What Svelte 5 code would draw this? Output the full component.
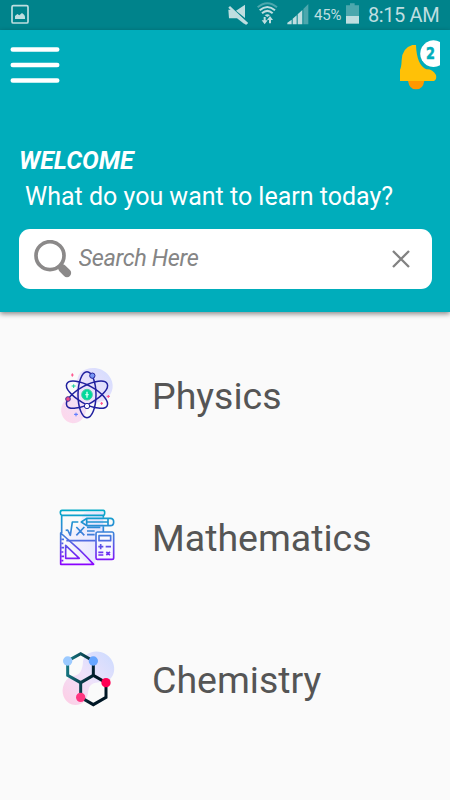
<script>
  let query = '';

  const subjects = ['Physics', 'Mathematics', 'Chemistry'];
</script>

<svelte:head>
  <title>Learn</title>
</svelte:head>

<div class="screen">
  <div class="status">
    <svg class="picture" width="18" height="20" viewBox="0 0 54 60">
      <rect x="3" y="5" width="48" height="52" rx="4" fill="none" stroke="currentColor" stroke-width="5" />
      <path d="M12 45V36L19 30L25 34L33 27L40 33L42 38V45z" fill="currentColor" />
    </svg>
    <div class="signals">
      <svg width="85" height="30" viewBox="20 0 255 90">
        <path d="M47 32L74 14V54zM24 29H38L83 69L77 74L73 70V73L50 55H26z" fill="currentColor" />
        <path d="M24 23L29 18L83 69L77 74z" fill="currentColor" />
        <g fill="none" stroke="currentColor" stroke-width="6">
          <path d="M112 22Q141 -3 170 22" opacity="0.4" />
          <path d="M118 31Q141 11 164 31M125 40Q141 25 157 40" />
          <path d="M133 66V51M149 53V70" />
        </g>
        <path d="M124 61H142L133 73zM140 60H158L149 48zM133 46Q141 39 149 46L141 51z" fill="currentColor" />
        <path d="M201 73V68L214 59V73zM217 73V56L229 46V73zM232 73V43L246 30V73z" fill="currentColor" />
        <path d="M249 73V27L264 12V73z" fill="currentColor" opacity="0.4" />
      </svg>
      <span class="percent">45%</span>
      <svg class="battery" width="13" height="30" viewBox="0 0 39 90">
        <path d="M0 16H12V10H26V16H39V48H0z" fill="currentColor" opacity="0.4" />
        <path d="M0 48H39V71H0z" fill="currentColor" />
      </svg>
      <span class="clock">8:15 AM</span>
    </div>
  </div>

  <header>
    <div class="toolbar">
      <button aria-label="Menu">
        <svg width="50" height="40" viewBox="0 0 50 40">
          <path d="M2.8 4.5H47.2M2.8 20H47.2M2.8 35.5H47.2" stroke="#fff" stroke-width="4.6" stroke-linecap="round" />
        </svg>
      </button>
      <button class="bell" aria-label="Notifications">
        <svg width="50" height="60" viewBox="0 0 150 180">
          <path d="M54 137H103Q99 163 78 163Q58 163 54 137z" fill="#ff9800" />
          <path d="M30 138V104Q34 98 35 76Q36 39 67 30H78Q80 90 109 103Q128 102 138 120Q141 133 132 138z" fill="#ffc107" />
          <path d="M150 11A47 47 0 1 0 150 102z" fill="#00adbb" />
          <path d="M150 21A40 40 0 1 0 150 91z" fill="#fff" />
        </svg>
        <span class="badge">2</span>
      </button>
    </div>
    <h1>WELCOME</h1>
    <p>What do you want to learn today?</p>
    <div class="search">
      <svg width="38" height="38" viewBox="0 0 114 114">
        <circle cx="48" cy="47" r="42" fill="none" stroke="#8b8989" stroke-width="11" />
        <path d="M78 78L82 82" stroke="#8b8989" stroke-width="14" />
        <path d="M85 85L99 99" stroke="#8b8989" stroke-width="25" stroke-linecap="round" />
      </svg>
      <input type="text" placeholder="Search Here" bind:value={query} />
      <button aria-label="Clear" on:click={() => (query = '')}>
        <svg width="18" height="18" viewBox="0 0 18 18">
          <path d="M1 1L17 17M17 1L1 17" stroke="#828282" stroke-width="2.3" />
        </svg>
      </button>
    </div>
  </header>

  <main>
    {#each subjects as subject}
      <div class="subject">
        {#if subject === 'Physics'}
          <svg width="70" height="70" viewBox="0 3 210 210">
            <defs>
              <linearGradient id="atom" x1="0" y1="1" x2="1" y2="0">
                <stop offset="0" stop-color="#ffd6e9" />
                <stop offset="0.5" stop-color="#eee2fa" />
                <stop offset="1" stop-color="#d2dcff" />
              </linearGradient>
            </defs>
            <path d="M76 111C82 80 76 56 91 38C114 18 155 19 177 47C195 70 190 99 170 116C150 132 119 123 110 145C106 173 91 190 68 190C42 187 27 161 36 136C43 119 57 111 76 111z" fill="url(#atom)" />
            <g fill="none" stroke="#20209f" stroke-width="4.5">
              <ellipse cx="111" cy="104" rx="27" ry="69" />
              <ellipse cx="111" cy="104" rx="27" ry="69" transform="rotate(61 111 104)" />
              <ellipse cx="111" cy="104" rx="27" ry="69" transform="rotate(-61 111 104)" />
            </g>
            <circle cx="111" cy="104" r="16" fill="#00d99b" stroke="#45cda3" stroke-width="3" />
            <path d="M111 95V113M106 104H116" stroke="#d5fff2" stroke-width="4" />
            <circle cx="127" cy="47" r="8" fill="#7796f5" stroke="#24249b" stroke-width="3" />
            <circle cx="54" cy="117" r="7" fill="#f04c88" stroke="#473098" stroke-width="3" />
            <circle cx="111" cy="138" r="8" fill="#f7f5ff" stroke="#24249b" stroke-width="3" />
            <path d="M67 40V50M63 45H71M175 105V114M170 109H180M155 126V135M151 130H159" stroke="#ff4d88" stroke-width="3" />
            <path d="M71 73V84M65 78H77" stroke="#16ce9c" stroke-width="3" />
            <path d="M78 158V169M72 163H84" stroke="#5576ff" stroke-width="3" />
          </svg>
        {:else if subject === 'Mathematics'}
          <svg width="70" height="70" viewBox="0 9 210 210">
            <defs>
              <linearGradient id="board" gradientUnits="userSpaceOnUse" x1="80" y1="30" x2="80" y2="195">
                <stop offset="0" stop-color="#00abc7" />
                <stop offset="0.5" stop-color="#4778dd" />
                <stop offset="1" stop-color="#8c00ff" />
              </linearGradient>
              <linearGradient id="shade" x1="0" x2="1">
                <stop offset="0" stop-color="#f8f4fc" />
                <stop offset="1" stop-color="#e3e4ff" />
              </linearGradient>
            </defs>
            <path d="M48 105C70 95 88 86 97 48Q99 36 115 36H160V100H136V190H121C90 183 73 145 48 127z" fill="url(#shade)" />
            <path d="M138 97H191V178H138z" fill="#f8f8ff" />
            <g fill="none" stroke="url(#board)" stroke-width="5" stroke-linejoin="round">
              <path d="M36 31H160Q164 31 164 38Q164 46 159 46H36Q31 45 31 38Q31 31 36 31zM35 46V99M160 46V53M160 79V96M49 122H137" />
              <path d="M47 91L53 90L61 106L67 66H85M79 81L103 106M103 81L79 106M111 82H151M111 93H134M111 104H134" />
              <path d="M94 66L110 55H181Q191 55 191 66Q191 77 181 77H110zM110 55V77M174 55V77M110 66H174" />
              <path d="M32 99V193H131L110 171L88 149L32 99zM47 136V175H88zM35 118H42M35 130H40M35 143H42M35 156H40M35 169H42M35 182H40" />
              <path d="M142 96H187Q191 96 191 101V173Q191 178 186 178H142Q138 178 138 173V101Q138 96 142 96zM147 107H182V122H147zM152 132V148M145 140H160M167 140H183M145 157H160M145 165H160M169 156L180 165M180 156L169 165" />
            </g>
          </svg>
        {:else}
          <svg width="70" height="70" viewBox="0 15 210 210">
            <defs>
              <linearGradient id="blob" x1="0" y1="1" x2="1" y2="0">
                <stop offset="0" stop-color="#ffcce3" />
                <stop offset="0.5" stop-color="#eee2fa" />
                <stop offset="1" stop-color="#cbdbff" />
              </linearGradient>
              <linearGradient id="bond" gradientUnits="userSpaceOnUse" x1="50" y1="100" x2="135" y2="115">
                <stop offset="0" stop-color="#167580" />
                <stop offset="1" stop-color="#001725" />
              </linearGradient>
            </defs>
            <path d="M66 108C91 108 98 89 99 64C104 34 143 26 170 44C198 63 201 106 174 121C151 132 120 119 115 153C112 181 99 194 76 195C48 194 33 166 39 141Q45 116 66 108z" fill="url(#blob)" />
            <g fill="none" stroke="url(#bond)" stroke-width="9" stroke-linejoin="miter">
              <path d="M130 106L92 128L53 106V63L92 41L130 63" />
              <path d="M92 128V172L130 194L168 172V128L130 106V63" />
            </g>
            <circle cx="53" cy="63" r="14" fill="#9ccaff" />
            <circle cx="130" cy="63" r="14" fill="#66a5ff" />
            <circle cx="92" cy="172" r="14" fill="#ff3680" />
            <circle cx="168" cy="128" r="14" fill="#ff0054" />
          </svg>
        {/if}
        <h2>{subject}</h2>
      </div>
    {/each}
  </main>
</div>

<style>
  :global(body) {
    background: #fafafa;
    overflow: hidden;
  }

  .screen {
    width: 450px;
    height: 800px;
    font-family: Roboto, sans-serif;
    background: #fafafa;
  }

  .screen * {
    box-sizing: border-box;
  }

  svg {
    display: block;
    flex: none;
  }

  button {
    position: relative;
    padding: 0;
    border: none;
    background: none;
    cursor: pointer;
  }

  .status {
    height: 30px;
    padding: 0 10px 0 11px;
    display: flex;
    align-items: center;
    justify-content: space-between;
    color: #bfdee0;
    background: #00838b;
  }

  .picture {
    margin-top: -2px;
  }

  .signals {
    display: flex;
    align-items: center;
    height: 30px;
  }

  .percent {
    width: 28px;
    margin-left: 2px;
    font-size: 15px;
    letter-spacing: -0.2px;
  }

  .battery {
    margin-left: 4px;
  }

  .clock {
    width: 72px;
    margin-left: 9px;
    font-size: 20px;
    letter-spacing: -0.4px;
    white-space: nowrap;
  }

  header {
    height: 282px;
    padding-top: 5px;
    background: #00adbb;
    box-shadow: 0 2px 5px rgba(0, 0, 0, 0.45);
  }

  .toolbar {
    display: flex;
    align-items: flex-start;
    justify-content: space-between;
    height: 111px;
    padding: 0 10px;
  }

  .toolbar button:first-child {
    margin-top: 10px;
  }

  .badge {
    position: absolute;
    top: 9px;
    left: 35px;
    color: #00adbb;
    font-family: 'DejaVu Sans', sans-serif;
    font-size: 16px;
    line-height: 20px;
    font-weight: 700;
    transform: scaleX(0.8);
    -webkit-text-stroke: 0.6px #00adbb;
  }

  h1 {
    margin: 0 0 0 19px;
    font-size: 25px;
    line-height: 30px;
    font-weight: 700;
    font-style: italic;
    color: #fff;
  }

  p {
    margin: 6px 0 0 25px;
    font-size: 25px;
    line-height: 30px;
    color: #fff;
    white-space: nowrap;
  }

  .search {
    display: flex;
    align-items: center;
    width: 413px;
    height: 60px;
    margin: 17px 0 0 18.5px;
    padding: 0 22px 0 15px;
    border-radius: 11px;
    background: #fff;
  }

  input {
    flex: 1;
    min-width: 0;
    padding: 0 0 2px;
    margin-left: 7px;
    border: none;
    outline: none;
    font: italic 23.5px Roboto, sans-serif;
    letter-spacing: -0.35px;
    color: #555;
    background: none;
  }

  input::placeholder {
    color: #858585;
    opacity: 1;
  }

  main {
    padding-top: 13px;
  }

  .subject {
    display: flex;
    align-items: center;
    height: 142px;
    padding-left: 50px;
  }

  h2 {
    margin: 0 0 1px 32px;
    font-size: 37.5px;
    line-height: 44px;
    font-weight: 400;
    color: #555;
  }
</style>
